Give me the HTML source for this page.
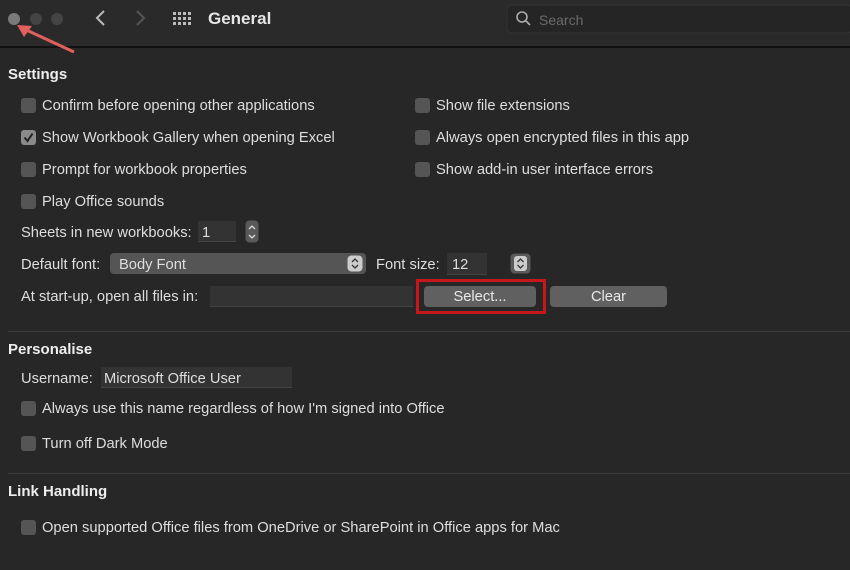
<!DOCTYPE html>
<html><head><style>
body{margin:0;width:850px;height:570px;background:#272727;font-family:"Liberation Sans",sans-serif;color:#dedede;font-size:14.7px;line-height:22px;position:relative;overflow:hidden}
.a{position:absolute;white-space:nowrap}
.cb{position:absolute;width:15px;height:15px;border-radius:3px;background:#555}
.h{font-weight:bold;font-size:15px;color:#eee}
.fld{position:absolute;background:#333;border-bottom:1px solid #444}
.btn{position:absolute;background:#606060;border-radius:4px;text-align:center;color:#e8e8e8;font-size:14.7px}
.sep{position:absolute;left:8px;right:0;height:1px;background:#3c3c3c}
</style></head><body>
<div class="a" style="left:0;top:0;width:850px;height:46px;background:#2a2a2a;border-bottom:2px solid #111"></div>
<div class="a" style="left:8px;top:13px;width:12px;height:12px;border-radius:50%;background:#7a7a7a"></div>
<div class="a" style="left:30px;top:13px;width:12px;height:12px;border-radius:50%;background:#444"></div>
<div class="a" style="left:51px;top:13px;width:12px;height:12px;border-radius:50%;background:#444"></div>
<svg class="a" style="left:0;top:0" width="850" height="60">
<path d="M22 28 L74 52" stroke="#e0605c" stroke-width="3"/>
<path d="M17 25 L32 26 L24 37 Z" fill="#e0605c"/>
<path d="M104 11 L97 18 L104 25" stroke="#bbb" stroke-width="2" fill="none"/>
<path d="M137 11 L144 18 L137 25" stroke="#555" stroke-width="2" fill="none"/>
<g fill="#bbb">
<rect x="173" y="12" width="3" height="3"/><rect x="178" y="12" width="3" height="3"/><rect x="183" y="12" width="3" height="3"/><rect x="188" y="12" width="3" height="3"/>
<rect x="173" y="17" width="3" height="3"/><rect x="178" y="17" width="3" height="3"/><rect x="183" y="17" width="3" height="3"/><rect x="188" y="17" width="3" height="3"/>
<rect x="173" y="22" width="3" height="3"/><rect x="178" y="22" width="3" height="3"/><rect x="183" y="22" width="3" height="3"/><rect x="188" y="22" width="3" height="3"/>
</g>
<rect x="507" y="5" width="345" height="28" rx="5" fill="#252525" stroke="#333"/>
<circle cx="522" cy="17" r="5" stroke="#aaa" stroke-width="1.6" fill="none"/>
<path d="M526 21 L530 25" stroke="#aaa" stroke-width="1.8"/>
</svg>
<div class="a" style="left:208px;top:8px;font-size:17px;font-weight:bold;color:#e6e6e6">General</div>
<div class="a" style="left:539px;top:9px;color:#6a6a6a;font-size:14px">Search</div>

<div class="a h" style="left:8px;top:64px">Settings</div>
<div class="cb" style="left:21px;top:98px"></div><div class="a" style="left:42px;top:95px">Confirm before opening other applications</div>
<div class="cb" style="left:21px;top:130px;background:#8a8a8a"></div>
<svg class="a" style="left:21px;top:130px" width="15" height="15"><path d="M3.5 7.5 L6.5 11 L11.5 3.5" stroke="#222" stroke-width="2" fill="none"/></svg>
<div class="a" style="left:42px;top:127px">Show Workbook Gallery when opening Excel</div>
<div class="cb" style="left:21px;top:162px"></div><div class="a" style="left:42px;top:159px">Prompt for workbook properties</div>
<div class="cb" style="left:21px;top:194px"></div><div class="a" style="left:42px;top:191px">Play Office sounds</div>
<div class="cb" style="left:415px;top:98px"></div><div class="a" style="left:436px;top:95px">Show file extensions</div>
<div class="cb" style="left:415px;top:130px"></div><div class="a" style="left:436px;top:127px">Always open encrypted files in this app</div>
<div class="cb" style="left:415px;top:162px"></div><div class="a" style="left:436px;top:159px">Show add-in user interface errors</div>

<div class="a" style="left:21px;top:222px">Sheets in new workbooks:</div>
<div class="fld" style="left:198px;top:221px;width:38px;height:20px"></div><div class="a" style="left:202px;top:222px">1</div>
<svg class="a" style="left:245px;top:220px" width="15" height="24"><rect x="0.5" y="0.5" width="13" height="22" rx="4" fill="#5a5a5a"/><path d="M4 9 L7 6 L10 9 M4 15 L7 18 L10 15" stroke="#ddd" stroke-width="1.3" fill="none"/></svg>

<div class="a" style="left:21px;top:254px">Default font:</div>
<div class="a" style="left:110px;top:253px;width:256px;height:21px;background:#555;border-radius:4px"></div>
<div class="a" style="left:119px;top:254px">Body Font</div>
<svg class="a" style="left:347px;top:255px" width="17" height="18"><rect x="0.5" y="0.5" width="15" height="16" rx="4" fill="#ccc"/><path d="M5 7 L8 4 L11 7 M5 10 L8 13 L11 10" stroke="#333" stroke-width="1.3" fill="none"/></svg>
<div class="a" style="left:376px;top:254px">Font size:</div>
<div class="fld" style="left:447px;top:253px;width:40px;height:21px"></div><div class="a" style="left:452px;top:254px">12</div>
<svg class="a" style="left:510px;top:253px" width="22" height="22"><rect x="0.5" y="0.5" width="20" height="20" rx="4" fill="#5a5a5a"/><rect x="4" y="3" width="13" height="15" rx="3" fill="#ccc"/><path d="M7.5 9 L10.5 6 L13.5 9 M7.5 12 L10.5 15 L13.5 12" stroke="#333" stroke-width="1.3" fill="none"/></svg>

<div class="a" style="left:21px;top:286px">At start-up, open all files in:</div>
<div class="fld" style="left:210px;top:286px;width:203px;height:20px"></div>
<div class="a" style="left:416px;top:279px;width:124px;height:29px;border:3px solid #c8161d"></div>
<div class="btn" style="left:424px;top:286px;width:112px;height:21px;line-height:22px">Select...</div>
<div class="btn" style="left:550px;top:286px;width:117px;height:21px;line-height:22px">Clear</div>

<div class="sep" style="top:331px"></div>
<div class="a h" style="left:8px;top:339px">Personalise</div>
<div class="a" style="left:21px;top:368px">Username:</div>
<div class="fld" style="left:101px;top:367px;width:191px;height:20px"></div>
<div class="a" style="left:104px;top:368px">Microsoft Office User</div>
<div class="cb" style="left:21px;top:401px"></div><div class="a" style="left:42px;top:398px">Always use this name regardless of how I'm signed into Office</div>
<div class="cb" style="left:21px;top:436px"></div><div class="a" style="left:42px;top:433px">Turn off Dark Mode</div>

<div class="sep" style="top:473px"></div>
<div class="a h" style="left:8px;top:481px">Link Handling</div>
<div class="cb" style="left:21px;top:520px"></div><div class="a" style="left:42px;top:517px">Open supported Office files from OneDrive or SharePoint in Office apps for Mac</div>
</body></html>
